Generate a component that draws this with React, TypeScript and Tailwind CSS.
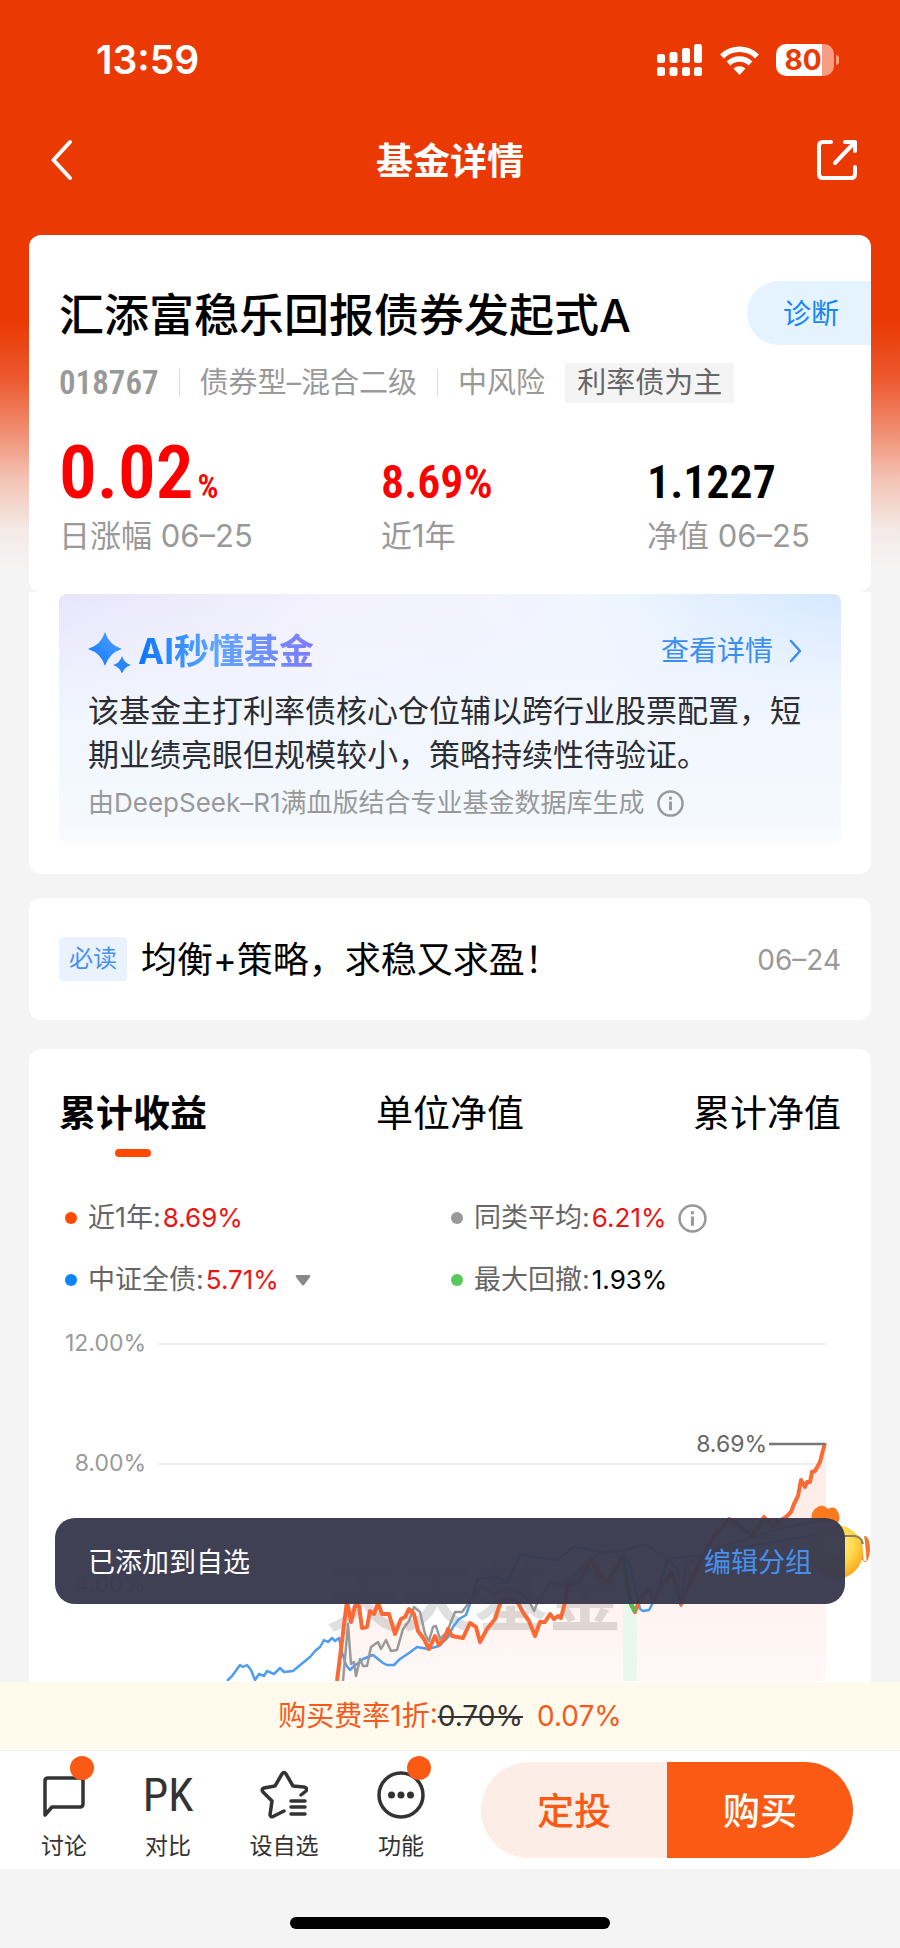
import { useState } from "react";
import clsx from "clsx";

type Metric = { value: string; unit?: string; label: string; tone: string };

const metrics: Metric[] = [
  { value: "0.02", unit: "%", label: "日涨幅 06–25", tone: "text-[#fe0000]" },
  { value: "8.69%", label: "近1年", tone: "text-[#fe0000]" },
  { value: "1.1227", label: "净值 06–25", tone: "text-black" },
];

const tabs = ["累计收益", "单位净值", "累计净值"];

const fundLine =
  "337,1682 347,1602 351,1623 355,1607 359,1607 362,1629 367,1628 370,1612 374,1615 378,1604 382,1615 389,1615 395,1635 401,1620 405,1618 409,1610 414,1615 418,1632 424,1640 429,1650 435,1637 439,1646 445,1639 448,1630 452,1637 463,1639 470,1624 476,1628 480,1643 487,1630 495,1620 501,1602 511,1600 518,1604 524,1615 529,1622 535,1637 540,1623 545,1623 550,1615 554,1620 558,1617 561,1619 565,1603 568,1587 580,1583 591,1560 600,1577 608,1583 623,1557 627,1585 631,1605 635,1613 640,1600 649,1590 654,1602 660,1590 672,1573 681,1605 689,1587 700,1562 712,1540 729,1520 740,1527 752,1537 764,1518 772,1527 786,1518 791,1513 794,1505 798,1497 801,1481 805,1488 807,1483 810,1483 812,1473 815,1472 820,1463 822,1455 825,1444";

const bondLine =
  "227,1682 232,1677 240,1666 243,1668 247,1666 251,1671 255,1681 259,1675 264,1677 267,1672 274,1675 280,1669 284,1673 293,1672 299,1667 310,1658 315,1652 320,1648 324,1641 328,1643 332,1639 335,1642 339,1639 342,1653 346,1666 350,1671 354,1667 357,1665 363,1660 373,1656 378,1660 383,1664 387,1666 394,1666 400,1660 409,1654 417,1648 428,1650 439,1647 448,1638 453,1628 459,1620 466,1616 471,1602 478,1580 494,1578 508,1582 520,1555 534,1558 557,1561 574,1548 603,1553 623,1552 631,1570 640,1610 643,1612 649,1611 654,1602 668,1560 700,1556 740,1548 780,1542 825,1534";

const peerLine =
  "343,1682 348,1625 351,1665 354,1663 356,1677 360,1660 363,1667 367,1667 371,1648 378,1643 381,1650 386,1641 391,1652 397,1651 403,1630 409,1622 414,1608 420,1613 425,1635 429,1642 433,1628 436,1627 440,1640 447,1633 455,1613 462,1613 468,1605 482,1587 494,1596 505,1588 518,1592 528,1600 534,1612 538,1602 551,1583 565,1586 585,1565 603,1553 623,1552 645,1545 665,1558 678,1570 681,1607 686,1565 720,1548 780,1530 825,1520";

export default function App() {
  return (
    <div className="flex min-h-screen flex-col bg-[#f4f4f4] bg-[linear-gradient(to_bottom,#ea3903_0,#ea3903_320px,#ec5a30_380px,#f08c70_430px,#f4c4b6_480px,#f4eae7_530px,#f4f4f4_570px)] font-['Inter','Noto_Sans_CJK_SC',sans-serif]">
      <StatusBar />
      <header className="flex h-20 items-center justify-between pr-[43px] pl-[51px] text-white">
        <button aria-label="返回" className="w-8">
          <svg width="21" height="42" viewBox="0 0 21 42" fill="none" stroke="currentColor" strokeWidth="4" strokeLinecap="round" strokeLinejoin="round">
            <path d="M19 3 2.500 21 19 39" />
          </svg>
        </button>
        <h1 className="pt-1 text-[37px] font-bold">基金详情</h1>
        <button aria-label="分享">
          <svg width="40" height="42" viewBox="0 0 40 42" fill="none" stroke="currentColor" strokeWidth="4" strokeLinecap="round" strokeLinejoin="round">
            <path d="M14 3H6Q2 3 2 7v28q0 4 4 4h28q4 0 4-4v-7M28 3h10v9M37 4 18 24" />
          </svg>
        </button>
      </header>
      <main className="flex flex-1 flex-col px-[29px] pt-[35px]">
        <FundSummary />
        <AiSummary />
        <a href="#notice" className="mt-6 flex h-[122px] items-center rounded-xl bg-white px-[30px]">
          <span className="rounded bg-[#e9f2fe] px-2.5 text-2xl leading-[44px] text-[#4791ee]">必读</span>
          <span className="ml-3.5 flex-1 pt-0.5 text-[36px] text-black">均衡+策略，求稳又求盈！</span>
          <span className="pt-0.5 text-[28px] text-[#999]">06–24</span>
        </a>
        <Performance />
      </main>
      <BottomBar />
    </div>
  );
}

function StatusBar() {
  return (
    <div className="flex h-[120px] items-center justify-between pr-[61px] pl-[96px] text-white">
      <span className="text-[39px] font-semibold">13:59</span>
      <div className="flex items-center gap-[17px]">
        <svg width="46" height="32" viewBox="0 0 46 32" fill="currentColor">
          <rect x="0" y="10" width="8" height="9" rx="2.500" />
          <rect x="12.500" y="8" width="8" height="11" rx="2.500" />
          <rect x="25" y="4" width="8" height="15" rx="2.500" />
          <rect x="37" y="0" width="8" height="19" rx="2.500" />
          <rect x="0" y="23" width="8" height="9" rx="2.500" />
          <rect x="12.500" y="23" width="8" height="9" rx="2.500" />
          <rect x="25" y="23" width="8" height="9" rx="2.500" />
          <rect x="37" y="23" width="8" height="9" rx="2.500" />
        </svg>
        <svg width="39" height="30" viewBox="0 0 39 30" fill="none" stroke="currentColor" strokeWidth="5.500">
          <path d="M2 11.500a25 25 0 0 1 35 0M8.500 18.500a16 16 0 0 1 22 0" />
          <path d="M13.500 23.500a9 9 0 0 1 12 0L19.500 30z" fill="currentColor" stroke="none" />
        </svg>
        <div className="flex items-center gap-0.5">
          <div className="flex h-8 w-[58px] items-center justify-center rounded-[10px] bg-[linear-gradient(to_right,#fff_46px,#f59c82_46px)] pr-1 text-[28px] font-bold text-[#ea3903]">
            80
          </div>
          <span className="h-2.5 w-[3px] rounded-r-full bg-[#f59c82]" />
        </div>
      </div>
    </div>
  );
}

function FundSummary() {
  return (
    <section className="rounded-xl bg-white pt-[42px] pb-9 pl-[30px]">
      <div className="flex items-center justify-between">
        <h2 className="pt-1.5 text-[45px] leading-[66px] font-medium text-black">汇添富稳乐回报债券发起式A</h2>
        <button className="h-16 rounded-l-full bg-[#e5f3ff] pt-0.5 pr-8 pl-9 text-[28px] text-[#1687f5]">诊断</button>
      </div>
      <div className="mt-3 flex h-11 items-center text-[29px] text-[#999]">
        <span className="font-['Roboto_Condensed','Roboto'] text-[33px] font-semibold">018767</span>
        <span className="mx-5 h-7 w-px bg-[#ddd]" />
        <span>债券型–混合二级</span>
        <span className="mx-5 h-7 w-px bg-[#ddd]" />
        <span>中风险</span>
        <span className="ml-5 bg-[#f4f4f4] px-3 leading-10 text-[#666]">利率债为主</span>
      </div>
      <dl className="mt-[25px] grid grid-cols-[322px_266px_1fr]">
        {metrics.map((metric) => (
          <div key={metric.label} className="flex flex-col-reverse">
            <dt className="text-[31px] leading-10 text-[#999]">{metric.label}</dt>
            <dd
              className={clsx(
                "flex h-[86px] items-baseline font-['Roboto_Condensed','Roboto'] font-semibold",
                metric.tone,
                metric.unit ? "text-[75px] leading-[84px]" : "text-[46px] leading-[104px]",
              )}
            >
              {metric.value}
              {metric.unit && <span className="ml-1 text-[33px]">{metric.unit}</span>}
            </dd>
          </div>
        ))}
      </dl>
    </section>
  );
}

function AiSummary() {
  return (
    <section className="rounded-b-xl bg-white px-[30px] pt-0.5 pb-[30px]">
      <div className="rounded-lg bg-[linear-gradient(to_bottom,transparent,#f1f6ff_50%,#f5f9ff_92%,#fafcff),radial-gradient(circle_at_100%_0%,#d5e8ff,transparent_30%),linear-gradient(100deg,#e8e5fb,#f4f2fd_35%,#f0f6ff_70%,#e9f3ff)] px-[29px] pt-[33px] pb-[21px]">
        <div className="flex h-12 items-center">
          <svg width="44" height="44" viewBox="0 0 44 44">
            <defs>
              <linearGradient id="spark" x1="1" y1="0" x2="0" y2="1">
                <stop offset="0" stopColor="#5aa0ff" />
                <stop offset="1" stopColor="#0a7aff" />
              </linearGradient>
            </defs>
            <path d="M17 3q4 13 17 17-13 4-17 17Q13 24 0 20 13 16 17 3z" fill="url(#spark)" />
            <path d="M34 27q2 7 9 9-7 2-9 9-2-7-9-9 7-2 9-9z" fill="#2b85fb" />
          </svg>
          <h3 className="ml-1.5 flex-1 text-[35px] font-bold">
            <span className="bg-[linear-gradient(to_right,#0a75ff,#5fa6ff_45%,#8079fb)] bg-clip-text text-transparent">AI秒懂基金</span>
          </h3>
          <a href="#detail" className="flex items-center gap-4 pr-2.5 text-[28px] text-[#3a8ef0]">
            查看详情
            <svg width="13" height="24" viewBox="0 0 13 24" fill="none" stroke="currentColor" strokeWidth="2.500" strokeLinecap="round" strokeLinejoin="round">
              <path d="m2 2 9 10-9 10" />
            </svg>
          </a>
        </div>
        <p className="mt-3.5 text-[31px] leading-[44px] text-[#2b2d33]">
          该基金主打利率债核心仓位辅以跨行业股票配置，短期业绩亮眼但规模较小，策略持续性待验证。
        </p>
        <p className="mt-1.5 flex items-center text-[26px] leading-10 text-[#999]">
          由DeepSeek–R1满血版结合专业基金数据库生成
          <InfoIcon size={27} />
        </p>
      </div>
    </section>
  );
}

function InfoIcon({ size }: { size: number }) {
  return (
    <svg className="ml-3 text-[#999]" width={size} height={size} viewBox="0 0 28 28" fill="none" stroke="currentColor" strokeWidth="2.500">
      <circle cx="14" cy="14" r="12.500" />
      <path d="M14 12v9M14 7v3" strokeWidth="3" />
    </svg>
  );
}

function Performance() {
  const [active, setActive] = useState(0);

  return (
    <section className="relative mt-[29px] flex-1 rounded-t-xl bg-white">
      <div className="flex justify-between px-[30px] pt-[38px]">
        {tabs.map((tab, i) => (
          <button key={tab} onClick={() => setActive(i)} className="flex flex-col items-center text-[37px] leading-[54px] text-black">
            <span className={clsx(i === active && "font-bold")}>{tab}</span>
            <span className={clsx("mt-2 h-2 w-9 rounded-full", i === active && "bg-[#ff4800]")} />
          </button>
        ))}
      </div>
      <div className="mt-[30px] grid grid-cols-[386px_1fr] pl-9 text-[27px] leading-[62px] text-[#666]">
        <Legend dot="bg-[#ff4800]" label="近1年:" value="8.69%" tone="text-[#ee1212]" />
        <Legend dot="bg-[#999]" label="同类平均:" value="6.21%" tone="text-[#ee1212]">
          <InfoIcon size={29} />
        </Legend>
        <Legend dot="bg-[#0a84ff]" label="中证全债:" value="5.71%" tone="text-[#ee1212]">
          <svg className="ml-4" width="16" height="11" viewBox="0 0 16 11" fill="#888">
            <path d="M2 0h12q2 0 1 2L9 10q-1 1-2 0L1 2Q0 0 2 0z" />
          </svg>
        </Legend>
        <Legend dot="bg-[#57c95a]" label="最大回撤:" value="1.93%" tone="text-black" />
      </div>
      <ReturnChart />
      <div className="absolute inset-x-[26px] bottom-[78px] flex h-[86px] items-center justify-between rounded-[20px] bg-[#393a4e]/97 px-[33px] pt-1 text-[27px] text-white">
        <span>已添加到自选</span>
        <button className="text-[#4791ee]">编辑分组</button>
      </div>
    </section>
  );
}

function Legend(props: { dot: string; label: string; value: string; tone: string; children?: React.ReactNode }) {
  return (
    <div className="flex items-center">
      <span className={clsx("mr-[11px] size-3 rounded-full", props.dot)} />
      {props.label}
      <span className={clsx("ml-0.5 text-[26px]", props.tone)}>{props.value}</span>
      {props.children}
    </div>
  );
}

function ReturnChart() {
  return (
    <svg className="block w-full" viewBox="29 1312 842 370" role="img" aria-label="累计收益">
      <defs>
        <linearGradient id="area" x1="0" y1="0" x2="0" y2="1">
          <stop offset="0" stopColor="#fdeae5" />
          <stop offset="1" stopColor="#fff8f6" />
        </linearGradient>
        <radialGradient id="face" cx="0.45" cy="0.35" r="0.65">
          <stop offset="0" stopColor="#fff3a0" />
          <stop offset="0.6" stopColor="#fdd84a" />
          <stop offset="1" stopColor="#f9a91c" />
        </radialGradient>
      </defs>
      <path d="M158 1345H826M158 1465H826M158 1585H826" stroke="#efefef" strokeWidth="2" />
      <g fontSize="23" fill="#999" textAnchor="end">
        <text x="146" y="1352">12.00%</text>
        <text x="146" y="1472">8.00%</text>
        <text x="146" y="1593">4.00%</text>
      </g>
      <polygon points={`${fundLine} 826,1444 826,1682`} fill="url(#area)" />
      <text x="326" y="1626" fontSize="74" fontWeight="700" fill="#000" fillOpacity="0.12">
        天天基金
      </text>
      <rect x="623" y="1552" width="14" height="130" fill="#e8f8ea" />
      <g fill="none" strokeLinejoin="round">
        <polyline points={bondLine} stroke="#4f9cf0" strokeWidth="2.500" />
        <polyline points={peerLine} stroke="#999" strokeWidth="2.500" />
        <polyline points={fundLine} stroke="#fb6a35" strokeWidth="4" />
        <path d="M623 1557 627 1585 631 1605 635 1613" stroke="#4fbf52" strokeWidth="4" />
      </g>
      <path d="M769 1445H825" stroke="#777" strokeWidth="2.500" />
      <text x="767" y="1453" fontSize="23" fill="#666" textAnchor="end">
        8.69%
      </text>
      <g>
        <path d="M812 1522q-2-9 4-13 7-5 12 1 7-4 10 3 3 6 0 11z" fill="#fb7a1c" />
        <ellipse cx="865" cy="1550" rx="5" ry="13" fill="#f2772e" />
        <circle cx="836" cy="1553" r="27" fill="url(#face)" />
        <path d="M859 1520q5 18 6 42" fill="none" stroke="#fff" strokeWidth="3" />
        <path d="M838 1537h16q7 0 9 8" fill="none" stroke="#8c8052" strokeWidth="2" />
      </g>
    </svg>
  );
}

function BottomBar() {
  return (
    <footer className="sticky bottom-0 bg-[#f4f4f4]">
      <p className="border-b border-[#f1efec] bg-[#fffaeb] text-center text-[28px] leading-[68px] text-[#f5591c]">
        购买费率1折:<del className="text-[#333]">0.70%</del>
        <span className="ml-3.5">0.07%</span>
      </p>
      <div className="flex h-[118px] items-center bg-white pr-[47px] pl-3">
        <nav className="mr-[27px] flex pt-3 text-[23px] text-[#333]">
          <NavItem label="讨论" className="w-[104px]" badge>
            <path d="M5 45V11q0-3 3-3h32q3 0 3 3v23q0 3-3 3H12z" />
          </NavItem>
          <button className="flex w-[104px] flex-col items-center">
            <span className="font-['Roboto_Condensed','Roboto'] text-[46px] leading-[50px]">PK</span>
            <span className="mt-2.5 leading-8">对比</span>
          </button>
          <NavItem label="设自选" className="w-32">
            <path d="M41 25l5-4q2-3-2-4l-11-1-7-12q-2-3-4 0l-7 12-11 2q-3 1-1 4l9 9-2 14q1 3 4 1l10-5M31 31h14M31 37h14M31 44h14" />
          </NavItem>
          <NavItem label="功能" className="w-[106px]" badge>
            <circle cx="24" cy="25" r="22" />
            <path d="M14.500 25h.01M24 25h.01M33.500 25h.01" strokeWidth="7" />
          </NavItem>
        </nav>
        <div className="flex h-24 flex-1 overflow-hidden rounded-full text-[37px] font-medium">
          <button className="flex-1 bg-[#fdede7] pt-1 text-[#fb5a14]">定投</button>
          <button className="flex-1 bg-[#fb5a14] pt-1 text-white">购买</button>
        </div>
      </div>
      <div className="flex h-[79px] justify-center pt-12">
        <span className="h-3 w-80 rounded-full bg-black" />
      </div>
    </footer>
  );
}

function NavItem(props: { label: string; className: string; badge?: boolean; children: React.ReactNode }) {
  return (
    <button className={clsx("flex flex-col items-center", props.className)}>
      <span className="relative">
        <svg width="48" height="50" viewBox="0 0 48 50" fill="none" stroke="currentColor" strokeWidth="3.500" strokeLinecap="round" strokeLinejoin="round">
          {props.children}
        </svg>
        {props.badge && <span className="absolute -top-3.5 -right-1.5 size-6 rounded-full bg-[#fb5a14]" />}
      </span>
      <span className="mt-2.5 leading-8">{props.label}</span>
    </button>
  );
}
